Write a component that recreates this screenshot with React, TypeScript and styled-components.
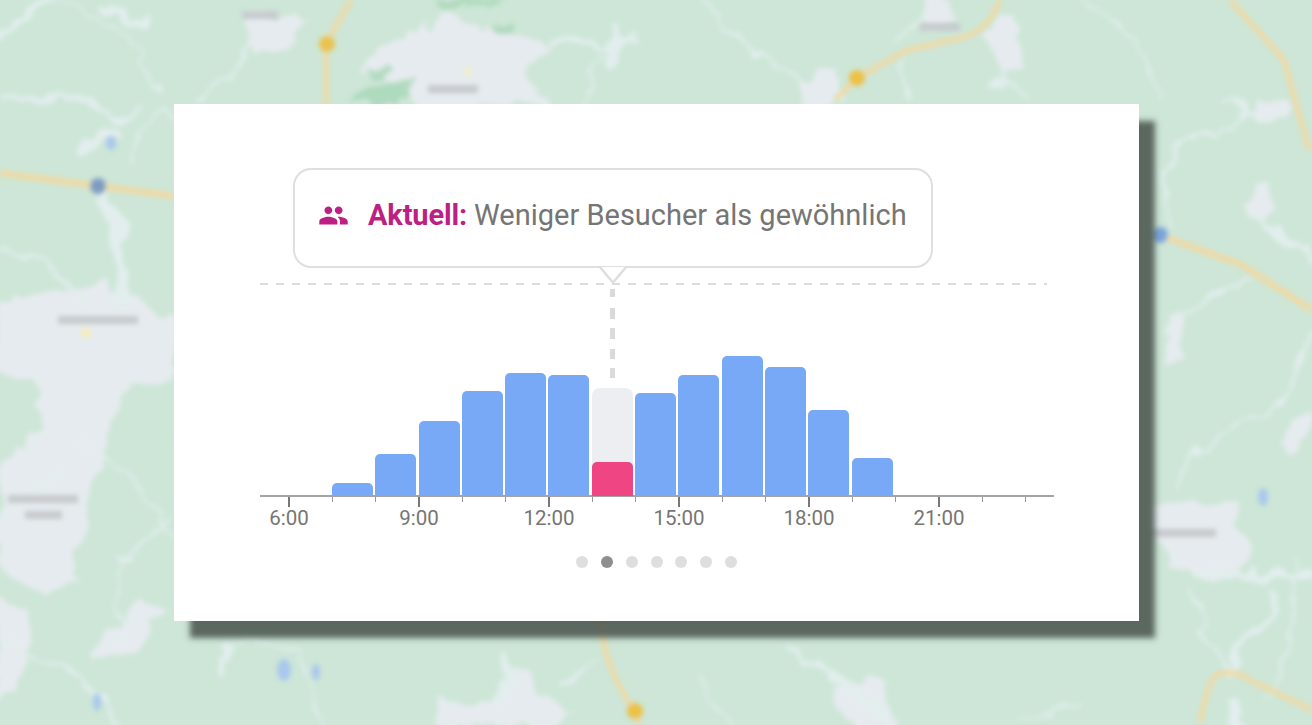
import React from "react";
import styled, { createGlobalStyle } from "styled-components";
import { MdPeople } from "react-icons/md";

const Global = createGlobalStyle`
  html, body { margin: 0; padding: 0; background: #cde6d7; }
  body { font-family: Roboto, "Liberation Sans", sans-serif; }
`;

const Page = styled.div`
  position: relative;
  width: 1312px;
  height: 725px;
  overflow: hidden;
  box-sizing: border-box;
  padding: 104px 0 0 174px;
  background: #cde6d7;
`;

const MapLayer = styled.svg`
  position: absolute;
  inset: 0;
  width: 1312px;
  height: 725px;
`;

const Card = styled.section`
  position: relative;
  box-sizing: border-box;
  width: 965px;
  height: 517px;
  padding: 64px 0 0 86px;
  background: #fff;
  box-shadow: 16px 17px 6px rgba(66, 76, 70, 0.82);
`;

const Callout = styled.div`
  position: relative;
  box-sizing: border-box;
  display: flex;
  align-items: center;
  width: 640px;
  height: 100px;
  margin-left: 33px;
  padding: 0 0 6px 23px;
  background: #fff;
  border: 2.5px solid #dfdfdf;
  border-radius: 18px;
  font-size: 29px;
  color: #757575;
  white-space: nowrap;
`;

const CalloutTail = styled.svg`
  position: absolute;
  left: 302px;
  bottom: -18.5px;
  width: 32px;
  height: 18px;
`;

const PeopleIcon = styled(MdPeople)`
  flex: none;
  width: 31px;
  height: 31px;
  color: #bd1f83;
  margin: 0 19px 0 0;
`;

const Strong = styled.strong`
  color: #bd1f83;
  font-weight: 700;
  letter-spacing: -0.15px;
  margin-right: 7px;
`;

const GuideLine = styled.div`
  width: 787px;
  height: 2px;
  margin-top: 15px;
  background: repeating-linear-gradient(90deg, #dcdcdc 0 8px, transparent 8px 16px);
`;

const Chart = styled.div`
  position: relative;
  width: 794px;
`;

const DropLine = styled.div`
  position: absolute;
  left: 350px;
  top: 2px;
  width: 5px;
  height: 91px;
  background: repeating-linear-gradient(180deg, transparent 0 2px, #dadada 2px 10px, transparent 10px 21px, #dadada 21px 32px, transparent 32px 41px, #dadada 41px 52px, transparent 52px 62px, #dadada 62px 72px, transparent 72px 81px, #dadada 81px 91px);
`;

const Bars = styled.div`
  display: flex;
  align-items: flex-end;
  gap: 2.3px;
  height: 211px;
  padding-left: 72px;
`;

const Bar = styled.div<{ $h: number }>`
  flex: none;
  width: 41px;
  height: ${(p) => p.$h}px;
  background: #78a9f6;
  border-radius: 5px 5px 0 0;
`;

const CurrentBar = styled.div<{ $h: number }>`
  flex: none;
  display: flex;
  align-items: flex-end;
  width: 41px;
  height: ${(p) => p.$h}px;
  background: #eceef1;
  border-radius: 8px 8px 0 0;
`;

const CurrentFill = styled.div<{ $h: number }>`
  width: 100%;
  height: ${(p) => p.$h}px;
  background: #f04583;
  border-radius: 5px 5px 0 0;
`;

const Axis = styled.div`
  display: flex;
  align-items: flex-start;
  height: 33px;
  padding-left: 7.4px;
  border-top: 2px solid #a4a4a4;
  margin-top: -1px;
`;

const Hour = styled.div`
  flex: none;
  display: flex;
  flex-direction: column;
  align-items: center;
  width: 43.33px;
`;

const Tick = styled.div<{ $major: boolean }>`
  width: 1.5px;
  height: ${(p) => (p.$major ? 10 : 5)}px;
  background: ${(p) => (p.$major ? "#777" : "#999")};
`;

const HourLabel = styled.span`
  font-size: 20.5px;
  line-height: 20px;
  padding-top: 1px;
  color: #757575;
  white-space: nowrap;
`;

const Dots = styled.div`
  display: flex;
  justify-content: center;
  gap: 12.7px;
  width: 793px;
  margin-top: 26px;
`;

const Dot = styled.span<{ $active?: boolean }>`
  width: 12px;
  height: 12px;
  border-radius: 50%;
  background: ${(p) => (p.$active ? "#8f8f8f" : "#dedede")};
`;

const urban = [
  "M364 72 L382 46 L425 36 L445 14 L478 26 L502 36 L546 46 L522 70 L548 104 L420 104 L402 80 Z",
  "M0 305 L50 298 L100 290 L174 320 L174 372 L126 388 L102 440 L86 502 L72 575 L30 592 L0 560 L4 472 L26 440 L40 392 L0 372 Z",
  "M250 18 L305 24 L298 42 L258 50 Z",
  "M924 0 L952 0 L950 22 L930 22 Z",
  "M988 28 L1012 20 L1022 62 L1000 66 Z",
  "M802 82 L836 68 L832 100 L812 104 Z",
  "M1158 510 L1236 505 L1244 560 L1216 584 L1170 566 Z",
  "M96 655 L140 602 L160 612 L130 650 Z",
  "M438 700 L500 705 L515 668 L525 670 L530 700 L568 712 L560 725 L445 725 Z",
  "M1256 100 L1286 98 L1286 114 L1258 116 Z",
  "M1254 187 L1264 185 L1266 214 L1256 214 Z",
  "M1170 318 L1180 316 L1182 362 L1168 362 Z",
  "M1284 440 L1306 412 L1310 420 L1292 448 Z",
  "M838 690 L880 680 L895 725 L850 725 Z",
  "M0 600 L30 610 L20 690 L0 700 Z",
];

const greens = [
  "M435 0 L502 0 L495 8 L440 10 Z",
  "M485 27 L516 20 L512 34 L488 36 Z",
  "M347 104 L360 92 L418 74 L410 92 L396 104 Z",
  "M368 72 L386 66 L382 80 L372 80 Z",
];

const parks = [
  "M0 382 L36 382 L40 425 L20 455 L0 440 Z",
  "M128 392 L174 378 L174 450 L122 440 Z",
];

const streams: [string, number][] = [
  ["M0 37 L21 17 L54 0", 5],
  ["M105 8 L146 27", 6],
  ["M0 103 L33 98 L92 100 L111 123 L142 107", 5],
  ["M84 147 L113 134", 9],
  ["M251 33 L247 57 L201 100", 3],
  ["M134 160 L138 130 L176 113", 2],
  ["M98 195 L118 230 L125 300", 12],
  ["M0 250 L40 260 L90 300", 3],
  ["M545 38 L600 45 L640 38", 5],
  ["M611 25 L614 66", 6],
  ["M640 30 L600 60 L580 104", 2],
  ["M60 0 L130 35 L160 90", 1.5],
  ["M0 520 L60 470", 3],
  ["M0 640 L80 680 L120 725", 3],
  ["M80 440 L140 490 L174 540", 2],
  ["M170 520 L120 560 L120 640", 2],
  ["M226 650 L226 670", 7],
  ["M320 725 L300 650 L230 640", 2],
  ["M506 660 L506 700", 8],
  ["M600 660 L560 690", 2],
  ["M700 0 L770 60 L800 85", 2],
  ["M990 80 L1028 100", 3],
  ["M1000 66 L995 85", 2],
  ["M836 90 L845 104", 3],
  ["M905 60 L906 104", 2],
  ["M930 10 L895 45", 2],
  ["M1080 0 L1140 40 L1160 104", 2],
  ["M1250 117 L1171 147 L1162 200 L1171 227", 3],
  ["M1225 100 L1250 117 L1284 110", 3],
  ["M1258 213 L1312 260", 5],
  ["M1162 333 L1200 300 L1254 280", 3],
  ["M1179 485 L1200 449 L1284 399 L1312 330", 2.5],
  ["M1200 575 L1309 575", 7],
  ["M1271 589 L1275 615 L1233 655 L1225 672", 6],
  ["M1195 590 L1205 640 L1225 672", 2],
  ["M1300 560 L1290 640 L1270 700", 2],
  ["M790 652 L865 695 L890 722", 7],
  ["M1233 709 L1245 725", 10],
  ["M730 725 L700 680", 2],
  ["M1020 725 L1080 700", 2],
];

const roads: [string, number][] = [
  ["M351 0 L326 43 L326 104", 4],
  ["M0 173 L98 186 L174 196", 5],
  ["M1000 0 Q990 28 965 37 L907 50 L857 78 L835 100", 4],
  ["M1230 0 L1284 60 L1309 150", 4],
  ["M1160 235 L1242 265 L1312 310", 5],
  ["M1200 722 Q1208 680 1217 675 Q1232 668 1250 680 L1312 710", 4],
  ["M600 621 Q605 670 635 711 L640 725", 4],
];

const labels = [
  "M242 15 L278 15",
  "M428 89 L478 89",
  "M920 27 L960 27",
  "M58 320 L138 320",
  "M8 499 L78 499",
  "M25 515 L62 515",
  "M1150 533 L1216 533",
];

const waters: [number, number, number, number][] = [
  [111, 143, 5, 7],
  [284, 670, 7, 11],
  [316, 672, 4, 8],
  [97, 702, 4, 9],
  [1263, 497, 5, 9],
];

const markers: [number, number, string][] = [
  [327, 44, "#eac24e"],
  [857, 78, "#ecc144"],
  [635, 711, "#ecc144"],
  [98, 186, "#7d9cc0"],
  [1160, 235, "#7ba6dc"],
];

const MapArt = () => (
  <MapLayer viewBox="0 0 1312 725" aria-hidden="true">
    <defs>
      <filter id="wispy" x="-5%" y="-5%" width="110%" height="110%">
        <feTurbulence type="fractalNoise" baseFrequency="0.035" numOctaves="3" seed="7" result="n" />
        <feDisplacementMap in="SourceGraphic" in2="n" scale="26" xChannelSelector="R" yChannelSelector="G" />
        <feGaussianBlur stdDeviation="2.6" />
      </filter>
      <filter id="soft" x="-5%" y="-5%" width="110%" height="110%">
        <feGaussianBlur stdDeviation="2.6" />
      </filter>
    </defs>
    <g filter="url(#wispy)">
      {urban.map((d) => (
        <path key={d} d={d} fill="#e6ebef" stroke="#e6ebef" strokeWidth={6} strokeLinejoin="round" />
      ))}
      {parks.map((d) => (
        <path key={d} d={d} fill="#cde6d7" />
      ))}
      {greens.map((d) => (
        <path key={d} d={d} fill="#a9d8b9" opacity={0.85} />
      ))}
      {streams.map(([d, w]) => (
        <path key={d} d={d} fill="none" stroke="#e2eeee" strokeWidth={w + 1} strokeLinejoin="round" strokeLinecap="round" />
      ))}
    </g>
    <g filter="url(#soft)">
      {roads.map(([d, w]) => (
        <path key={d} d={d} fill="none" stroke="#f1d9a2" strokeWidth={w + 1} strokeLinejoin="round" />
      ))}
      {waters.map(([x, y, rx, ry]) => (
        <ellipse key={x} cx={x} cy={y} rx={rx} ry={ry} fill="#a8c8ee" />
      ))}
      {labels.map((d) => (
        <path key={d} d={d} stroke="#c6cacd" strokeWidth={8} fill="none" />
      ))}
      {markers.map(([x, y, c]) => (
        <circle key={x} cx={x} cy={y} r={8} fill={c} />
      ))}
      <circle cx={86} cy={333} r={5} fill="#f5edb8" />
      <circle cx={468} cy={72} r={4} fill="#f3f0c8" />
    </g>
  </MapLayer>
);

const barHeights = [13, 42, 75, 105, 123, 121, 108, 103, 121, 140, 129, 86, 38];
const CURRENT = 6;
const hours = Array.from({ length: 18 }, (_, i) => 6 + i);

export default function App() {
  return (
    <Page>
      <Global />
      <MapArt />
      <Card>
        <Callout>
          <PeopleIcon />
          <Strong>Aktuell:</Strong>
          <span>Weniger Besucher als gewöhnlich</span>
          <CalloutTail viewBox="0 0 32 18" aria-hidden="true">
            <path d="M3 0 L16 15 L29 0 Z" fill="#fff" />
            <path d="M2 -1 L16 15.5 L30 -1" fill="none" stroke="#dfdfdf" strokeWidth={2.5} />
          </CalloutTail>
        </Callout>
        <GuideLine />
        <Chart>
          <DropLine />
          <Bars>
            {barHeights.map((h, i) =>
              i === CURRENT ? (
                <CurrentBar key={i} $h={h}>
                  <CurrentFill $h={34} />
                </CurrentBar>
              ) : (
                <Bar key={i} $h={h} />
              )
            )}
          </Bars>
          <Axis>
            {hours.map((h) => {
              const major = h % 3 === 0;
              return (
                <Hour key={h}>
                  <Tick $major={major} />
                  {major && <HourLabel>{h}:00</HourLabel>}
                </Hour>
              );
            })}
          </Axis>
        </Chart>
        <Dots>
          {Array.from({ length: 7 }, (_, i) => (
            <Dot key={i} $active={i === 1} />
          ))}
        </Dots>
      </Card>
    </Page>
  );
}
